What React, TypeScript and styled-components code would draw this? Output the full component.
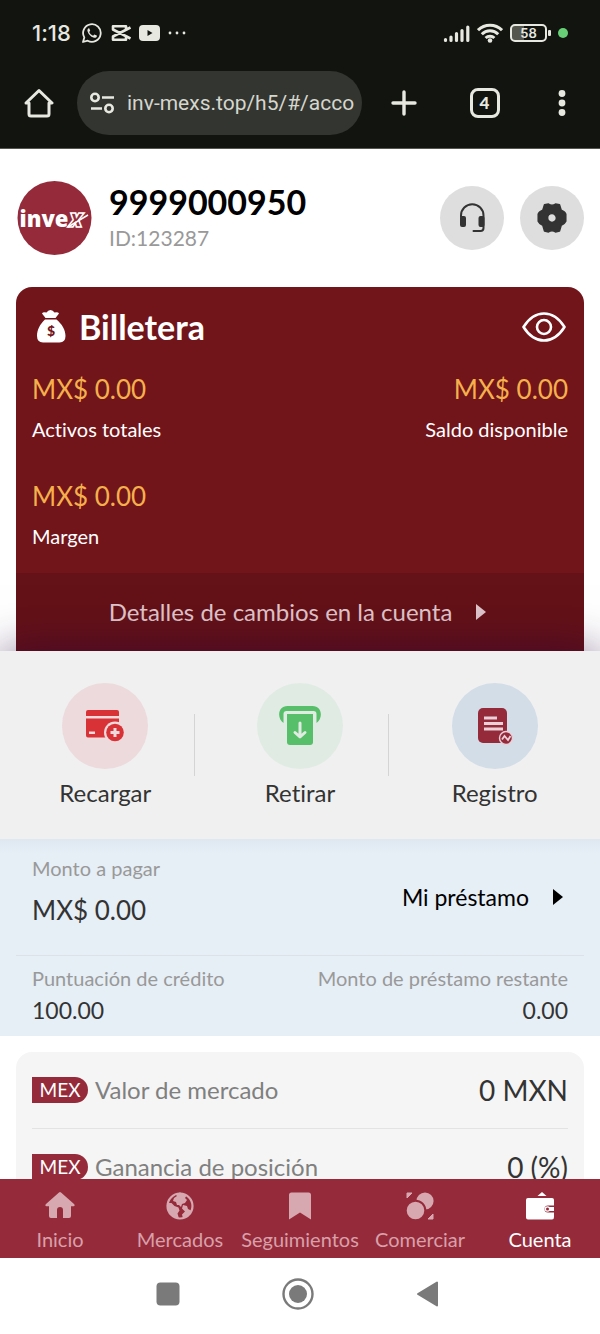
import React from 'react';
import styled, { createGlobalStyle } from 'styled-components';

const GlobalStyle = createGlobalStyle`
  *, *::before, *::after { box-sizing: border-box; }
  body { margin: 0; background: #fff; font-variant-ligatures: none; }
  body, button, input { font-family: Lato, "Noto Sans", sans-serif; }
  button { border: 0; padding: 0; background: none; color: inherit; cursor: pointer; font-variant-ligatures: none; }
  h1, h2, p, dl, dd, dt { margin: 0; font-weight: 400; }
  svg { display: block; flex: none; }
`;

const Screen = styled.div`
  display: flex;
  flex-direction: column;
  height: 100vh;
`;

/* Phone and browser chrome */
const Chrome = styled.header`
  flex: none;
  background: #12140f;
  border-bottom: 1px solid #55574f;
  color: #e7e8e0;
`;
const StatusBar = styled.div`
  display: flex;
  align-items: center;
  justify-content: space-between;
  height: 66px;
  padding: 0 32px;
`;
const StatusGroup = styled.div<{ $gap: number }>`
  display: flex;
  align-items: center;
  gap: ${p => p.$gap}px;
`;
const Clock = styled.time`
  margin-right: 2px;
  font-family: Inter, sans-serif;
  font-size: 22px;
  line-height: 28px;
  font-weight: 500;
`;
const Battery = styled.div`
  display: flex;
  align-items: center;
  gap: 1px;
  &::after { content: ''; width: 3px; height: 6px; border-radius: 1px; background: #e7e8e0; }
`;
const BatteryLevel = styled.span`
  width: 37px;
  height: 18px;
  border: 2px solid #e7e8e0;
  border-radius: 5px;
  background: linear-gradient(90deg, #55574f 12px, transparent 12px);
  font-family: Inter, sans-serif;
  font-size: 13px;
  font-weight: 600;
  line-height: 14px;
  text-align: center;
`;
const PrivacyDot = styled.i`
  width: 10px;
  height: 10px;
  border-radius: 50%;
  background: #67d076;
`;
const BrowserBar = styled.div`
  display: flex;
  align-items: center;
  height: 82px;
  padding-bottom: 8px;
`;
const ChromeButton = styled.button<{ $wide?: boolean }>`
  flex: none;
  display: grid;
  place-items: center;
  width: ${p => (p.$wide ? 84 : 77)}px;
  height: 64px;
`;
const AddressBar = styled.label`
  flex: 1;
  min-width: 0;
  display: flex;
  align-items: center;
  gap: 12px;
  height: 64px;
  padding: 0 8px 0 12px;
  border-radius: 32px;
  background: #333530;
`;
const Address = styled.input`
  flex: 1;
  min-width: 0;
  padding: 0;
  border: 0;
  outline: 0;
  background: none;
  color: #d5d6ce;
  && { font-family: Roboto, sans-serif; }
  font-size: 21px;
  line-height: 28px;
`;
const TabCount = styled.span`
  width: 30px;
  height: 30px;
  border: 3px solid #e7e8e0;
  border-radius: 8px;
  font-size: 17px;
  font-weight: 900;
  line-height: 23px;
`;

/* Account page */
const Page = styled.main`
  flex: 1;
  min-height: 0;
  overflow: auto;
  scrollbar-width: none;
`;
const Profile = styled.section`
  display: flex;
  align-items: center;
  gap: 16px;
  padding: 32px 16px;
`;
const Who = styled.div`
  flex: 1;
`;
const Phone = styled.h1`
  && { font-weight: 700; }
  font-size: 34px;
  line-height: 40px;
  color: #000;
`;
const UserId = styled.p`
  font-size: 21px;
  line-height: 32px;
  color: #999;
`;
const RoundButton = styled.button`
  display: grid;
  place-items: center;
  width: 64px;
  height: 64px;
  border-radius: 50%;
  && { background: #dedede; }
`;

const Wallet = styled.section`
  margin: 0 16px;
  border-radius: 16px 16px 0 0;
  overflow: hidden;
  background: #72151b;
  color: #fff;
`;
const WalletHead = styled.div`
  display: flex;
  align-items: center;
  gap: 8px;
  padding: 16px 18px 16px 17px;
`;
const WalletTitle = styled.h2`
  flex: 1;
  padding-left: 2px;
  && { font-weight: 700; }
  font-size: 34px;
  line-height: 48px;
`;
const Balances = styled.dl`
  display: grid;
  grid-template-columns: 1fr 1fr;
  row-gap: 27px;
  padding: 2px 16px 17px;
`;
const Balance = styled.div<{ $end?: boolean }>`
  display: flex;
  flex-direction: column-reverse;
  text-align: ${p => (p.$end ? 'right' : 'left')};
`;
const BalanceLabel = styled.dt`
  font-size: 20px;
  line-height: 40px;
`;
const BalanceValue = styled.dd`
  font-size: 26px;
  line-height: 40px;
  color: #f5b04c;
`;
const Details = styled.button`
  display: flex;
  align-items: center;
  justify-content: center;
  gap: 23px;
  width: 100%;
  height: 78px;
  padding-right: 4px;
  && { background: #641117; color: #e0c6cb; }
  font-size: 24px;
  line-height: 32px;
`;

const Actions = styled.section`
  position: relative;
  display: grid;
  grid-template-columns: repeat(3, 1fr);
  padding: 32px 8px 30px;
  background: #f0f0f0;
  box-shadow: 0 0 44px rgba(38, 0, 60, 0.55);
`;
const Action = styled.button`
  display: flex;
  flex-direction: column;
  align-items: center;
  gap: 8px;
  font-size: 24px;
  line-height: 32px;
  && { color: #333; }
  &:not(:last-child) { background: linear-gradient(#d4d4d4, #d4d4d4) right 8px top 31px / 1px 62px no-repeat; }
`;
const ActionIcon = styled.span<{ $tint: string }>`
  display: grid;
  place-items: center;
  width: 86px;
  height: 86px;
  border-radius: 50%;
  background: ${p => p.$tint};
`;

const Loan = styled.section`
  position: relative;
  padding: 0 16px;
  background: linear-gradient(#dfe8f0, #e6eef6 14px);
`;
const LoanRow = styled.div<{ $pad: string }>`
  display: flex;
  justify-content: space-between;
  align-items: center;
  padding: ${p => p.$pad};
  & + & { border-top: 1px solid #dde2e8; }
`;
const LoanFigure = styled.dl<{ $end?: boolean }>`
  text-align: ${p => (p.$end ? 'right' : 'left')};
`;
const LoanLabel = styled.dt`
  font-size: 20px;
  line-height: 32px;
  color: #999;
`;
const LoanValue = styled.dd<{ $large?: boolean }>`
  font-size: ${p => (p.$large ? 26 : 23)}px;
  line-height: ${p => (p.$large ? 52 : 32)}px;
  color: #333;
`;
const LoanLink = styled.a`
  display: flex;
  align-items: center;
  gap: 23px;
  padding: 6px 4px 0 0;
  font-size: 23px;
  line-height: 32px;
  color: #000;
  text-decoration: none;
`;

const Market = styled.dl`
  margin: 16px 16px 0;
  padding: 0 16px;
  border-radius: 16px;
  background: #f5f5f5;
`;
const MarketRow = styled.div`
  display: flex;
  align-items: center;
  justify-content: space-between;
  height: 76px;
  & + & { border-top: 1px solid #e3e3e3; }
`;
const MarketLabel = styled.dt`
  display: flex;
  align-items: center;
  gap: 7px;
  font-size: 24px;
  line-height: 32px;
  color: #808080;
`;
const Tag = styled.span`
  width: 56px;
  border-radius: 0 13px 13px 0;
  background: #952b3a;
  color: #fff;
  font-size: 19px;
  line-height: 26px;
  text-align: center;
`;
const MarketValue = styled.dd`
  font-size: 28px;
  line-height: 40px;
  color: #333;
`;

const TabBar = styled.nav`
  flex: none;
  display: grid;
  grid-template-columns: repeat(5, 1fr);
  height: 79px;
  background: #952b3a;
`;
const Tab = styled.a<{ $active?: boolean }>`
  display: flex;
  flex-direction: column;
  align-items: center;
  gap: 4px;
  padding-top: 12px;
  font-size: 20px;
  line-height: 28px;
  color: ${p => (p.$active ? '#fff' : '#d9a0aa')};
  text-decoration: none;
  white-space: nowrap;
`;
const SystemBar = styled.footer`
  flex: none;
  display: flex;
  justify-content: center;
  gap: 102px;
  height: 76px;
  padding: 0 4px 4px 0;
  background: #fff;
`;
const SystemButton = styled.button`
  && { color: #7a7a7a; }
`;

const WhatsApp = () => (
  <svg width="22" height="22" viewBox="0 0 22 22" fill="none" stroke="currentColor">
    <path d="M2 20l1.3-4.6a8.8 8.8 0 1 1 3.4 3.3z" strokeWidth="1.8" strokeLinejoin="round" />
    <path d="M7.600 6.200c-1.200.7-1.500 2-.9 3.500 1 2.800 3 4.900 5.700 5.900 1.500.6 3 .2 3.500-1.300l-.1-.7-2.500-1.200-1.200 1.300c-1.900-.8-3.100-2-3.900-3.700l1-1.200-1-2.500z" fill="currentColor" stroke="none" />
  </svg>
);
const CapCut = () => (
  <svg width="20" height="18" viewBox="0 0 20 18" fill="none" stroke="currentColor" strokeWidth="2.600" strokeLinejoin="round">
    <path d="M19.500 3.500L2 12.500v3.300h13V13M19.500 14.500L2 5.500V2.200h13V5" />
  </svg>
);
const YouTube = () => (
  <svg width="21" height="16" viewBox="0 0 21 16">
    <rect width="21" height="16" rx="4" fill="currentColor" />
    <path d="M8.500 5l5 3-5 3z" fill="#12140f" />
  </svg>
);
const Ellipsis = () => (
  <svg width="18" height="4" viewBox="0 0 18 4" fill="currentColor">
    <circle cx="2" cy="2" r="1.400" /><circle cx="9" cy="2" r="1.400" /><circle cx="16" cy="2" r="1.400" />
  </svg>
);
const Signal = () => (
  <svg width="27" height="17" viewBox="0 0 27 17" stroke="currentColor" strokeWidth="3.200" strokeLinecap="round">
    <path d="M2.500 15.400v-.8M8 15.400v-3.400M13.500 15.400V8.500M19 15.400V5.500M24.800 15.400V2" />
  </svg>
);
const Wifi = () => (
  <svg width="26" height="20" viewBox="0 0 26 20" fill="none" stroke="currentColor" strokeWidth="3">
    <path d="M1 7.200a17 17 0 0 1 24 0M4.800 11.200a11.600 11.600 0 0 1 16.400 0M8.600 15a6.300 6.300 0 0 1 8.800 0" />
    <circle cx="13" cy="17.500" r="2.300" fill="currentColor" stroke="none" />
  </svg>
);
const HomeOutline = () => (
  <svg width="30" height="30" viewBox="0 0 30 30" fill="none" stroke="currentColor" strokeWidth="3" strokeLinejoin="round">
    <path d="M2 15L15 2.500 28 15h-3v11a2 2 0 0 1-2 2H7a2 2 0 0 1-2-2V15z" />
  </svg>
);
const SiteSettings = () => (
  <svg width="26" height="22" viewBox="0 0 26 22" fill="none" stroke="currentColor" strokeWidth="2.600">
    <circle cx="6" cy="5.500" r="3.700" /><path d="M13 5.500h12M2 16.500h11" /><circle cx="20" cy="16.500" r="3.700" />
  </svg>
);
const Plus = () => (
  <svg width="26" height="26" viewBox="0 0 26 26" stroke="currentColor" strokeWidth="3.400" strokeLinecap="round">
    <path d="M13 2v22M2 13h22" />
  </svg>
);
const Kebab = () => (
  <svg width="8" height="26" viewBox="0 0 8 26" fill="currentColor">
    <circle cx="4" cy="3.500" r="3.400" /><circle cx="4" cy="13" r="3.400" /><circle cx="4" cy="22.500" r="3.400" />
  </svg>
);
const Logo = () => (
  <svg width="77" height="74" viewBox="0 0 77 74" role="img" aria-label="invex">
    <circle cx="38.500" cy="37" r="37" fill="#952b3a" />
    <g fontFamily="Open Sans, sans-serif" fontWeight="800" fill="#fff">
      <text x="3.500" y="46" fontSize="22">inve</text>
      <text x="53" y="46" fontSize="24" fontStyle="italic" fill="#952b3a" stroke="#fff" strokeWidth="1.500">x</text>
    </g>
    <path d="M52 46l20-12" stroke="#fff" strokeWidth="1.500" />
  </svg>
);
const Headset = () => (
  <svg width="28" height="32" viewBox="0 0 28 32" fill="none" stroke="#333" strokeWidth="2" strokeLinecap="round">
    <path d="M3 15v-1.500a11 11 0 0 1 22.500 0V26q0 3-3 3h-7" />
    <rect x="3" y="15" width="4" height="9" rx="1" fill="#333" />
    <rect x="21.500" y="15" width="4" height="9" rx="1" fill="#333" />
  </svg>
);
const Gear = () => (
  <svg width="30" height="30" viewBox="0 0 30 30">
    <path
      fillRule="evenodd"
      fill="#333"
      stroke="#333"
      strokeWidth="1.500"
      strokeLinejoin="round"
      d="M7.500 1.800l4-.8q3.500 2.600 7 0l4 .8 1.700 5.400q4 1.600 4.600 4v7q-1 2.500-4.600 4L22.500 28l-4 1q-3.500-2.600-7 0l-4-1-1.700-5.800q-3.600-1.500-4.600-4v-7q.6-2.400 4.600-4zM15 10.600a4.400 4.400 0 1 0 0 8.800a4.400 4.400 0 1 0 0-8.800z"
    />
  </svg>
);
const MoneyBag = () => (
  <svg width="36" height="36" viewBox="0 0 36 36">
    <path fill="#fff" d="M12.500 9L9 4.500Q10 2.500 13.500 3.500Q15 1 17.500 1Q20 1 21.500 3.500Q25 2.500 26 4.500L22.500 9zM12 10.500h11.500C29 15 32.500 21 32.500 27q0 6-6 6.500H10q-6-.5-6-6.500C4 21 7 15 12 10.500z" />
    <text x="18" y="27" textAnchor="middle" fontFamily="Lato, sans-serif" fontSize="14" fontWeight="900" fill="#72151b">$</text>
  </svg>
);
const Eye = () => (
  <svg width="44" height="30" viewBox="0 0 44 30" fill="none" stroke="#fff" strokeWidth="2.600">
    <path d="M1.500 15Q10 1.500 22 1.500T42.500 15Q34 28.500 22 28.500T1.500 15z" strokeLinejoin="round" />
    <circle cx="22" cy="15" r="7" />
  </svg>
);
const Caret = () => (
  <svg width="12" height="18" viewBox="0 0 12 18" fill="currentColor"><path d="M1 1l10 8-10 8z" /></svg>
);
const CardPlus = () => (
  <svg width="40" height="32" viewBox="0 0 40 32">
    <path fill="#d93236" d="M3 0h29a2 2 0 0 1 2 2v4H1V2a2 2 0 0 1 2-2zM1 8.500h33v16l-8 3H3a2 2 0 0 1-2-2z" />
    <rect x="4" y="21.500" width="6" height="2.500" fill="#eddadc" />
    <circle cx="30" cy="22.500" r="11" fill="#eddadc" />
    <circle cx="30" cy="22.500" r="8.800" fill="#d93236" />
    <path d="M30 18v9M25.500 22.500h9" stroke="#eddadc" strokeWidth="3" />
  </svg>
);
const Withdraw = () => (
  <svg width="44" height="40" viewBox="0 0 44 40" fill="none">
    <path d="M5.500 17C-1.500 12 0 0 9.500 0h25C44 0 45.500 12 38.500 17V8a3 3 0 0 0-3-3h-27a3 3 0 0 0-3 3z" fill="#57be69" />
    <path d="M9 8h26v28a3 3 0 0 1-3 3H12a3 3 0 0 1-3-3z" fill="#57be69" />
    <path d="M22 17v13.500M17 26.500l5 4.500 5-4.500" stroke="#e0ece3" strokeWidth="3" strokeLinecap="round" strokeLinejoin="round" />
  </svg>
);
const Records = () => (
  <svg width="40" height="40" viewBox="0 0 40 40" fill="none">
    <rect x="3" y="2" width="29" height="35" rx="5" fill="#952b3a" />
    <path d="M9 12h13M9 17.500h19M9 23h19" stroke="#ead0d8" strokeWidth="2.800" />
    <circle cx="31" cy="32" r="6.500" fill="#952b3a" stroke="#ead0d8" strokeWidth="1.400" />
    <path d="M27 33.500l2.500-3.500 3.500 4 2.500-4" stroke="#ead0d8" strokeWidth="1.800" />
  </svg>
);
const HomeIcon = () => (
  <svg width="32" height="30" viewBox="0 0 32 30">
    <path fill="#d8a8b1" d="M15 1.600q1-1 2 0L30 13q1.500 1.800-.5 2.200H27V25q0 2-2 2h-6v-8q0-3-3-3t-3 3v8H7q-2 0-2-2v-9.800H2.500Q.5 14.800 2 13z" />
  </svg>
);
const GlobeIcon = () => (
  <svg width="30" height="30" viewBox="0 0 30 30">
    <circle cx="15" cy="15" r="12.500" fill="none" stroke="#d8a8b1" strokeWidth="2.200" />
    <path fill="#d8a8b1" d="M2.500 12l4 0 3 3 4 1.500 1 3-2 3 1.500 5C6 27 1 20 2.500 12zM10 3l5-1.500 7 2.500-2 3 2 2-2 3-3 1-1 3-2-2-2 0-1-3-3-1 1-3 3-2zM18 14l4 1 1 3 4 2-4 6-5 1.500-1-4 3-3-3-3z" />
  </svg>
);
const BookmarkIcon = () => (
  <svg width="30" height="30" viewBox="0 0 30 30">
    <path fill="#d8a8b1" d="M4 4q0-2.500 2.500-2.500h17Q26 1.500 26 4v24.500L15 21.500 4 28.500z" />
  </svg>
);
const TradeIcon = () => (
  <svg width="30" height="30" viewBox="0 0 30 30" fill="#d8a8b1">
    <circle cx="20" cy="10" r="8.600" />
    <circle cx="10.500" cy="19.500" r="9.800" stroke="#952b3a" strokeWidth="2" />
    <path d="M2 2h5L2 7zM28 23v5h-5z" stroke="#d8a8b1" strokeLinejoin="round" />
  </svg>
);
const WalletIcon = () => (
  <svg width="30" height="30" viewBox="0 0 30 30" fill="#fff">
    <path d="M12.500 5l4.500-4 4.500 4z" />
    <path d="M3 7h24q2 0 2 2v5.500h-6a3.500 3.500 0 0 0 0 7h6V26q0 2.500-2 2.500H3q-2 0-2-2V9q0-2 2-2z" />
    <path d="M29 16h-5.500a2 2 0 0 0 0 4H29z" />
    <circle cx="22.500" cy="18" r="2.800" />
    <circle cx="22.500" cy="18" r="1.500" fill="#952b3a" />
  </svg>
);

const tabs = [
  { label: 'Inicio', icon: <HomeIcon /> },
  { label: 'Mercados', icon: <GlobeIcon /> },
  { label: 'Seguimientos', icon: <BookmarkIcon /> },
  { label: 'Comerciar', icon: <TradeIcon /> },
  { label: 'Cuenta', icon: <WalletIcon />, active: true },
];
const actions = [
  { label: 'Recargar', tint: '#eddadc', icon: <CardPlus /> },
  { label: 'Retirar', tint: '#e0ece3', icon: <Withdraw /> },
  { label: 'Registro', tint: '#d3dde7', icon: <Records /> },
];
const balances = [
  { label: 'Activos totales', value: 'MX$ 0.00' },
  { label: 'Saldo disponible', value: 'MX$ 0.00', end: true },
  { label: 'Margen', value: 'MX$ 0.00' },
];
const market = [
  { label: 'Valor de mercado', value: '0 MXN' },
  { label: 'Ganancia de posición', value: '0 (%)' },
];

export default function App() {
  return (
    <Screen>
      <GlobalStyle />
      <Chrome>
        <StatusBar>
          <StatusGroup $gap={8}>
            <Clock>1:18</Clock>
            <WhatsApp /><CapCut /><YouTube /><Ellipsis />
          </StatusGroup>
          <StatusGroup $gap={7}>
            <Signal /><Wifi />
            <Battery><BatteryLevel>58</BatteryLevel></Battery>
            <PrivacyDot />
          </StatusGroup>
        </StatusBar>
        <BrowserBar>
          <ChromeButton aria-label="Inicio"><HomeOutline /></ChromeButton>
          <AddressBar>
            <SiteSettings />
            <Address aria-label="Dirección" defaultValue="inv-mexs.top/h5/#/acco" />
          </AddressBar>
          <ChromeButton $wide aria-label="Nueva pestaña"><Plus /></ChromeButton>
          <ChromeButton aria-label="Pestañas"><TabCount>4</TabCount></ChromeButton>
          <ChromeButton aria-label="Menú"><Kebab /></ChromeButton>
        </BrowserBar>
      </Chrome>

      <Page>
        <Profile>
          <Logo />
          <Who>
            <Phone>9999000950</Phone>
            <UserId>ID:123287</UserId>
          </Who>
          <RoundButton aria-label="Soporte"><Headset /></RoundButton>
          <RoundButton aria-label="Ajustes"><Gear /></RoundButton>
        </Profile>

        <Wallet>
          <WalletHead>
            <MoneyBag />
            <WalletTitle>Billetera</WalletTitle>
            <button aria-label="Mostrar saldo"><Eye /></button>
          </WalletHead>
          <Balances>
            {balances.map(b => (
              <Balance key={b.label} $end={b.end}>
                <BalanceLabel>{b.label}</BalanceLabel>
                <BalanceValue>{b.value}</BalanceValue>
              </Balance>
            ))}
          </Balances>
          <Details>Detalles de cambios en la cuenta <Caret /></Details>
        </Wallet>

        <Actions>
          {actions.map(a => (
            <Action key={a.label}>
              <ActionIcon $tint={a.tint}>{a.icon}</ActionIcon>
              {a.label}
            </Action>
          ))}
        </Actions>

        <Loan>
          <LoanRow $pad="13px 16px 19px">
            <LoanFigure>
              <LoanLabel>Monto a pagar</LoanLabel>
              <LoanValue $large>MX$ 0.00</LoanValue>
            </LoanFigure>
            <LoanLink href="#prestamo">Mi préstamo <Caret /></LoanLink>
          </LoanRow>
          <LoanRow $pad="6px 16px 10px">
            <LoanFigure>
              <LoanLabel>Puntuación de crédito</LoanLabel>
              <LoanValue>100.00</LoanValue>
            </LoanFigure>
            <LoanFigure $end>
              <LoanLabel>Monto de préstamo restante</LoanLabel>
              <LoanValue>0.00</LoanValue>
            </LoanFigure>
          </LoanRow>
        </Loan>

        <Market>
          {market.map(m => (
            <MarketRow key={m.label}>
              <MarketLabel><Tag>MEX</Tag>{m.label}</MarketLabel>
              <MarketValue>{m.value}</MarketValue>
            </MarketRow>
          ))}
        </Market>
      </Page>

      <TabBar>
        {tabs.map(t => (
          <Tab key={t.label} href={`#${t.label.toLowerCase()}`} $active={t.active}>
            {t.icon}
            {t.label}
          </Tab>
        ))}
      </TabBar>
      <SystemBar>
        <SystemButton aria-label="Recientes">
          <svg width="24" height="24" viewBox="0 0 24 24" fill="currentColor"><rect x=".5" y=".5" width="23" height="23" rx="4" /></svg>
        </SystemButton>
        <SystemButton aria-label="Pantalla de inicio">
          <svg width="32" height="32" viewBox="0 0 32 32"><circle cx="16" cy="16" r="14.500" fill="none" stroke="currentColor" strokeWidth="2.400" /><circle cx="16" cy="16" r="9" fill="currentColor" /></svg>
        </SystemButton>
        <SystemButton aria-label="Atrás">
          <svg width="24" height="28" viewBox="0 0 24 28"><path d="M2 14L21 2.500v23z" fill="currentColor" stroke="currentColor" strokeWidth="2" strokeLinejoin="round" /></svg>
        </SystemButton>
      </SystemBar>
    </Screen>
  );
}
